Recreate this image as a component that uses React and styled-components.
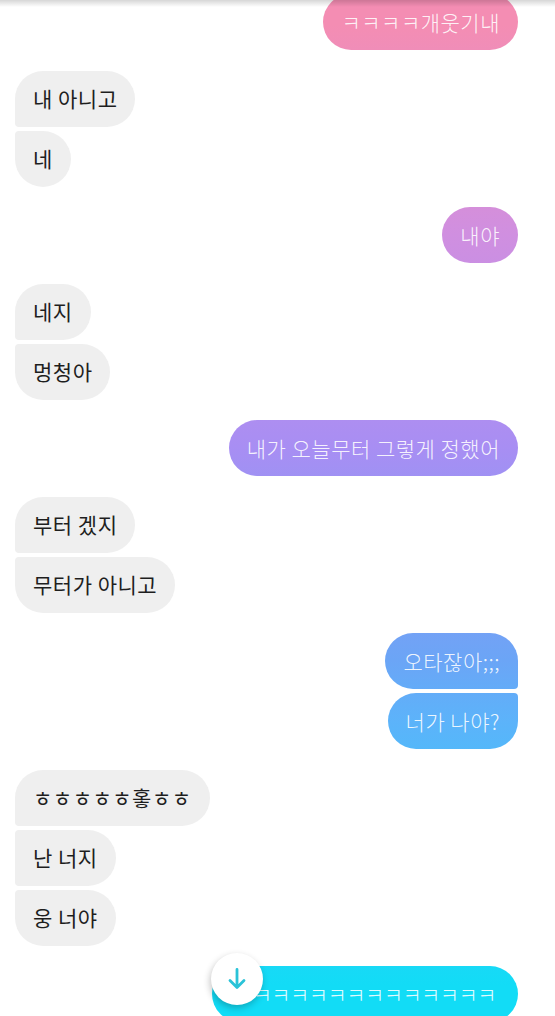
import React from "react";
import styled, { createGlobalStyle, css } from "styled-components";

const GlobalStyle = createGlobalStyle`
  html, body {
    margin: 0;
    padding: 0;
    background: #ffffff;
  }
  body {
    font-family: "Noto Sans CJK KR", "Noto Sans", sans-serif;
  }
`;

const Screen = styled.div`
  position: relative;
  width: 555px;
  height: 1016px;
  overflow: hidden;
  background: #ffffff;
`;

const TopShadow = styled.div`
  position: absolute;
  top: 0;
  left: 0;
  right: 0;
  height: 7px;
  background: linear-gradient(180deg, rgba(0, 0, 0, 0.16), rgba(0, 0, 0, 0));
  z-index: 2;
`;

const Thread = styled.div`
  display: flex;
  flex-direction: column;
  gap: 20.5px;
  margin-top: -6px;
  padding: 0 37px 0 15px;
`;

const Group = styled.div`
  display: flex;
  flex-direction: column;
  gap: 4px;
  align-items: ${(p) => (p.$sent ? "flex-end" : "flex-start")};
`;

const BIG = 28;
const SMALL = 4;

const radiusFor = (sent, pos) => {
  const topInner = pos === "middle" || pos === "last" ? SMALL : BIG;
  const bottomInner = pos === "first" || pos === "middle" ? SMALL : BIG;
  if (sent) {
    return `${BIG}px ${topInner}px ${bottomInner}px ${BIG}px`;
  }
  return `${topInner}px ${BIG}px ${BIG}px ${bottomInner}px`;
};

const Bubble = styled.div`
  box-sizing: border-box;
  height: 56px;
  display: flex;
  align-items: center;
  padding: 0 18px 0 18px;
  font-size: 21px;
  letter-spacing: 0.5px;
  line-height: 1;
  white-space: nowrap;
  border-radius: ${(p) => radiusFor(p.$sent, p.$pos)};
  ${(p) =>
    p.$sent
      ? css`
          color: rgba(255, 255, 255, 0.9);
          font-weight: 300;
          background: linear-gradient(
            180deg,
            #f48db3 0%,
            #f48db3 2.5%,
            #d08fe0 23%,
            #a88ef3 44%,
            #6ba5f6 65%,
            #5cb3fa 71%,
            #12dcf6 97%,
            #12dcf6 100%
          );
          background-attachment: fixed;
        `
      : css`
          color: #1e1e1e;
          font-weight: 400;
          background: #efefef;
        `}
`;

const LaughBubble = styled(Bubble)`
  letter-spacing: -0.6px;
  padding: 0 22px 0 22px;
`;

const ScrollDown = styled.button`
  position: absolute;
  left: 211px;
  top: 953px;
  width: 52px;
  height: 52px;
  border: none;
  border-radius: 50%;
  background: #ffffff;
  box-shadow: -1px 3px 7px rgba(0, 0, 0, 0.24);
  display: flex;
  align-items: center;
  justify-content: center;
  padding: 0;
  z-index: 3;
`;

const groups = [
  { sent: true, items: ["ㅋㅋㅋㅋ개웃기내"] },
  { sent: false, items: ["내 아니고", "네"] },
  { sent: true, items: ["내야"] },
  { sent: false, items: ["네지", "멍청아"] },
  { sent: true, items: ["내가 오늘무터 그렇게 정했어"] },
  { sent: false, items: ["부터 겠지", "무터가 아니고"] },
  { sent: true, items: ["오타잖아;;;", "너가 나야?"] },
  { sent: false, items: ["ㅎㅎㅎㅎㅎ홓ㅎㅎ", "난 너지", "웅 너야"] },
];

const posOf = (i, n) => {
  if (n === 1) return "single";
  if (i === 0) return "first";
  if (i === n - 1) return "last";
  return "middle";
};

export default function App() {
  return (
    <>
      <GlobalStyle />
      <Screen>
        <TopShadow />
        <Thread>
          {groups.map((g, gi) => (
            <Group key={gi} $sent={g.sent}>
              {g.items.map((t, i) => (
                <Bubble key={i} $sent={g.sent} $pos={posOf(i, g.items.length)}>
                  {t}
                </Bubble>
              ))}
            </Group>
          ))}
          <Group $sent>
            <LaughBubble $sent $pos="single">
              ㅋㅋㅋㅋㅋㅋㅋㅋㅋㅋㅋㅋㅋㅋ
            </LaughBubble>
          </Group>
        </Thread>
        <ScrollDown aria-label="scroll to bottom">
          <svg width="20" height="22" viewBox="0 0 20 22" fill="none">
            <path
              d="M10 1.5V19.5M3 12.5L10 19.5L17 12.5"
              stroke="#2ac3d8"
              strokeWidth="2.8"
              strokeLinecap="round"
              strokeLinejoin="round"
            />
          </svg>
        </ScrollDown>
      </Screen>
    </>
  );
}
